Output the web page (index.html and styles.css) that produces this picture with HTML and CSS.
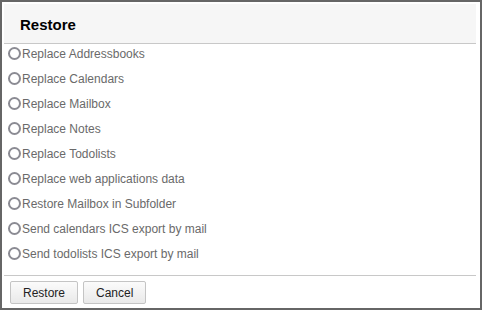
FILE: index.html
```html
<!DOCTYPE html>
<html>
<head>
<meta charset="utf-8">
<link rel="stylesheet" href="styles.css">
</head>
<body>
<div class="dialog">
  <div class="header"><h1 class="title">Restore</h1></div>
  <div class="options">
    <label class="option"><span class="radio"></span>Replace Addressbooks</label>
    <label class="option"><span class="radio"></span>Replace Calendars</label>
    <label class="option"><span class="radio"></span>Replace Mailbox</label>
    <label class="option"><span class="radio"></span>Replace Notes</label>
    <label class="option"><span class="radio"></span>Replace Todolists</label>
    <label class="option"><span class="radio"></span>Replace web applications data</label>
    <label class="option"><span class="radio"></span>Restore Mailbox in Subfolder</label>
    <label class="option"><span class="radio"></span>Send calendars ICS export by mail</label>
    <label class="option"><span class="radio"></span>Send todolists ICS export by mail</label>
  </div>
  <div class="footer">
    <button class="btn">Restore</button>
    <button class="btn">Cancel</button>
  </div>
</div>
</body>
</html>
```
FILE: styles.css
```css
html, body { margin: 0; padding: 0; background: #fff; }
body { font-family: "Liberation Sans", Arial, sans-serif; }
.dialog {
  width: 482px;
  height: 310px;
  box-sizing: border-box;
  border: 2px solid #666;
  padding: 2px 4px 0 2px;
  display: flex;
  flex-direction: column;
}
.header {
  height: 39px;
  background: #f6f6f6;
  border-bottom: 1px solid #c8c8c8;
  display: flex;
  align-items: center;
  padding-left: 16px;
}
.title {
  margin: 0;
  font-size: 15px;
  font-weight: bold;
  color: #000;
  padding-top: 1px;
}
.options { display: flex; flex-direction: column; }
.option {
  height: 25px;
  display: flex;
  align-items: flex-start;
  padding-top: 3px;
  box-sizing: border-box;
  font-size: 12px;
  line-height: 14px;
  color: #6a6a6a;
}
.radio {
  width: 13px;
  height: 13px;
  box-sizing: border-box;
  border: 2px solid #8b8b93;
  border-radius: 50%;
  margin-left: 4px;
  margin-right: 1px;
  flex: none;
}
.footer {
  margin-top: 6px;
  border-top: 1px solid #c8c8c8;
  padding: 5px 0 0 6px;
  display: flex;
  gap: 5px;
}
.btn {
  font-family: "Liberation Sans", Arial, sans-serif;
  font-size: 12px;
  color: #222;
  height: 23px;
  padding: 0 12px;
  border: 1px solid #c4c4c4;
  border-radius: 2px;
  background: linear-gradient(#fbfbfb, #e9e9e9);
}
```
